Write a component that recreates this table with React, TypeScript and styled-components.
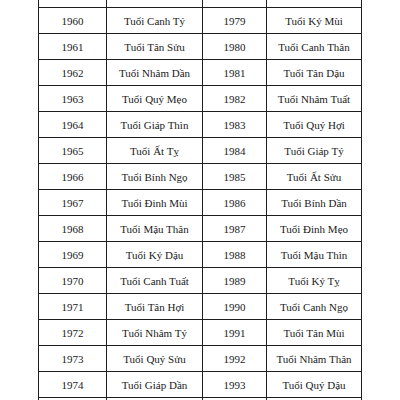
import React from 'react';
import styled, { createGlobalStyle } from 'styled-components';

const GlobalStyle = createGlobalStyle`
	html, body {
		margin: 0;
		padding: 0;
		background: #fff;
	}
`;

const rows: [string, string, string, string][] = [
	['', '', '', ''],
	['1960', 'Tuổi Canh Tý', '1979', 'Tuổi Kỷ Mùi'],
	['1961', 'Tuổi Tân Sửu', '1980', 'Tuổi Canh Thân'],
	['1962', 'Tuổi Nhâm Dần', '1981', 'Tuổi Tân Dậu'],
	['1963', 'Tuổi Quý Mẹo', '1982', 'Tuổi Nhâm Tuất'],
	['1964', 'Tuổi Giáp Thìn', '1983', 'Tuổi Quý Hợi'],
	['1965', 'Tuổi Ất Tỵ', '1984', 'Tuổi Giáp Tý'],
	['1966', 'Tuổi Bính Ngọ', '1985', 'Tuổi Ất Sửu'],
	['1967', 'Tuổi Đinh Mùi', '1986', 'Tuổi Bính Dần'],
	['1968', 'Tuổi Mậu Thân', '1987', 'Tuổi Đinh Mẹo'],
	['1969', 'Tuổi Kỷ Dậu', '1988', 'Tuổi Mậu Thìn'],
	['1970', 'Tuổi Canh Tuất', '1989', 'Tuổi Kỷ Tỵ'],
	['1971', 'Tuổi Tân Hợi', '1990', 'Tuổi Canh Ngọ'],
	['1972', 'Tuổi Nhâm Tý', '1991', 'Tuổi Tân Mùi'],
	['1973', 'Tuổi Quý Sửu', '1992', 'Tuổi Nhâm Thân'],
	['1974', 'Tuổi Giáp Dần', '1993', 'Tuổi Quý Dậu'],
	['', '', '', ''],
];

const widths = [68, 96, 64, 95];

function App() {
	return (
		<Page>
			<GlobalStyle />
			<Table>
				<colgroup>
					{widths.map((w, i) => (
						<Col key={i} $w={w} />
					))}
				</colgroup>
				<tbody>
					{rows.map((r, i) => (
						<Row key={i}>
							{r.map((c, j) => (
								<Cell key={j}>{c}</Cell>
							))}
						</Row>
					))}
				</tbody>
			</Table>
		</Page>
	);
}

const Page = styled.div`
	width: 400px;
	height: 400px;
	overflow: hidden;
	padding-left: 38px;
	box-sizing: border-box;
`;

const Table = styled.table`
	border-collapse: collapse;
	table-layout: fixed;
	width: 323px;
	margin-top: -19px;
	font-family: 'Liberation Serif', 'Times New Roman', serif;
	font-size: 11px;
	color: #1a1a1a;
`;

const Col = styled.col<{ $w: number }>`
	width: ${(p) => p.$w}px;
`;

const Row = styled.tr`
	height: 26px;
`;

const Cell = styled.td`
	border: 1px solid #1e1e1e;
	padding: 0;
	text-align: center;
	vertical-align: middle;
	white-space: nowrap;
`;

export default App;
